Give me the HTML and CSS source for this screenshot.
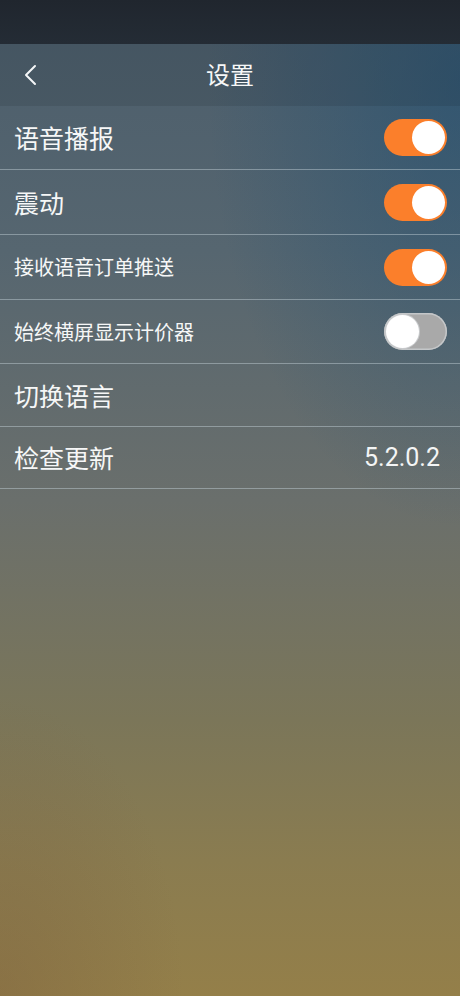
FILE: index.html
```html
<!DOCTYPE html>
<html lang="zh-CN">
<head>
<meta charset="utf-8">
<title>设置</title>
<link rel="stylesheet" href="styles.css">
</head>
<body>
<div class="screen">
  <div class="status"></div>
  <header class="header">
    <span class="back">
      <svg width="14" height="22" viewBox="0 0 14 22"><path d="M11 2 L2 11 L11 20" fill="none" stroke="#f4f6f7" stroke-width="2" stroke-linecap="round" stroke-linejoin="round"/></svg>
    </span>
    <h1 class="title">设置</h1>
    <span></span>
  </header>
  <ul class="list">
    <li class="row h64"><span class="label big">语音播报</span><span class="switch on"><i></i></span></li>
    <li class="row h65"><span class="label big">震动</span><span class="switch on"><i></i></span></li>
    <li class="row h65"><span class="label small">接收语音订单推送</span><span class="switch on"><i></i></span></li>
    <li class="row h64"><span class="label small">始终横屏显示计价器</span><span class="switch off"><i></i></span></li>
    <li class="row h63"><span class="label big">切换语言</span></li>
    <li class="row h62"><span class="label big">检查更新</span><span class="value">5.2.0.2</span></li>
  </ul>
</div>
</body>
</html>
```

FILE: styles.css
```css
* { box-sizing: border-box; }
html, body { margin: 0; padding: 0; }
body {
  width: 460px;
  height: 996px;
  overflow: hidden;
  font-family: "Noto Sans CJK SC", "Noto Sans", sans-serif;
  color: #f6f7f7;
}
.screen {
  width: 460px;
  height: 996px;
  background:
    radial-gradient(ellipse 55% 45% at 100% 8%, rgba(28, 78, 115, 0.55), rgba(28, 78, 115, 0) 100%),
    radial-gradient(ellipse 40% 30% at 0% 100%, rgba(120, 90, 60, 0.35), rgba(120, 90, 60, 0) 100%),
    linear-gradient(180deg, #4b5d6b 0px, #566670 250px, #6a6f6c 500px, #7b7659 720px, #8a7c50 860px, #947f49 996px);
  display: flex;
  flex-direction: column;
}
.status {
  height: 44px;
  background: linear-gradient(180deg, #20262e, #242c35);
}
.header {
  height: 62px;
  display: grid;
  grid-template-columns: 60px 1fr 60px;
  align-items: center;
  background: rgba(15, 25, 35, 0.12);
}
.back {
  padding-left: 24px;
  display: flex;
  align-items: center;
  height: 22px;
}
.title {
  margin: 0;
  text-align: center;
  font-size: 24px;
  font-weight: 400;
  line-height: 1;
  padding-bottom: 2px;
}
.list {
  list-style: none;
  margin: 0;
  padding: 0;
}
.row {
  display: flex;
  align-items: center;
  justify-content: space-between;
  padding: 0 13px 0 14px;
  border-bottom: 1px solid rgba(200, 212, 220, 0.45);
}
.h62 { height: 62px; }
.h63 { height: 63px; }
.h64 { height: 64px; }
.h65 { height: 65px; }
.label { line-height: 1; }
.big { font-size: 25px; }
.small { font-size: 20px; }
.value {
  font-family: Roboto, "Liberation Sans", sans-serif;
  font-size: 25px;
  padding-right: 7px;
  color: #f4f5f5;
}
.switch {
  width: 63px;
  height: 37px;
  border-radius: 19px;
  padding: 2px;
  display: flex;
  align-items: center;
}
.switch i {
  display: block;
  width: 33px;
  height: 33px;
  border-radius: 50%;
  background: #ffffff;
}
.switch.on {
  background: #fb7f2b;
  justify-content: flex-end;
}
.switch.off {
  background: #a9a9a9;
  justify-content: flex-start;
  box-shadow: inset 0 0 0 1.5px #c4c7c9;
}
.switch.off i {
  box-shadow: 0 0 0 1px #c9cbcd;
}
```
